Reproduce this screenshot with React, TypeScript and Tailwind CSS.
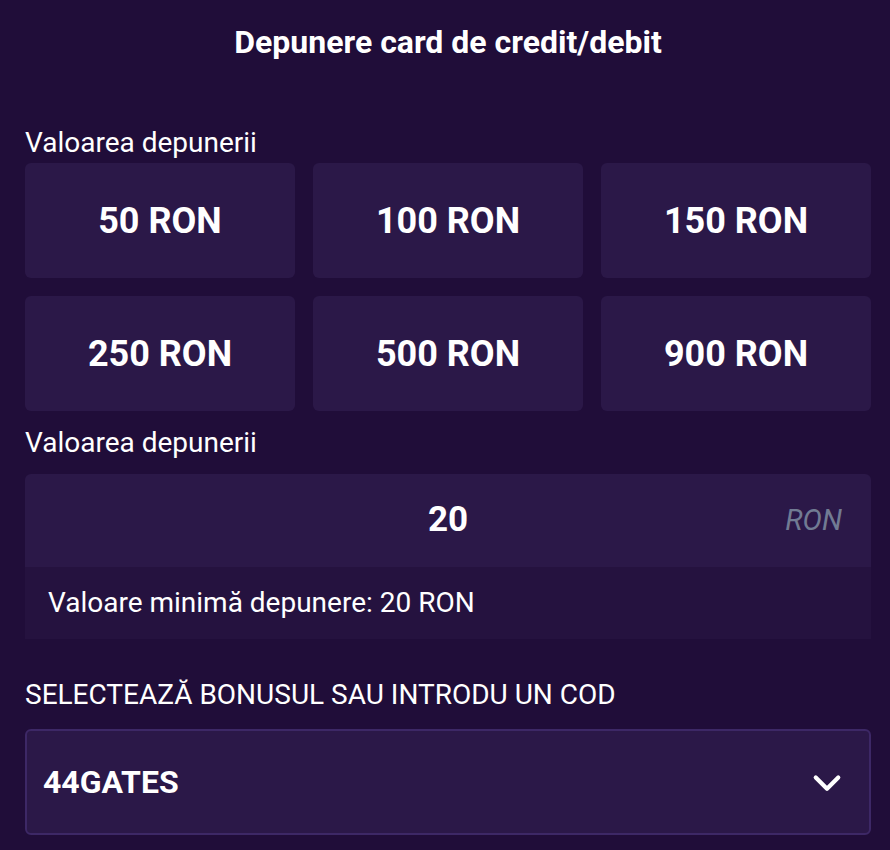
import React from "react";

const amounts = ["50 RON", "100 RON", "150 RON", "250 RON", "500 RON", "900 RON"];

export default function App() {
  return (
    <div
      className="min-h-[850px] w-full bg-[#200d39] text-white"
      style={{ fontFamily: "Roboto, 'Noto Sans', sans-serif" }}
    >
      <div className="pl-[25px] pr-[19px] pb-4">
        <h1 className="pt-[25px] text-center text-[32px] font-bold leading-[34px]">
          Depunere card de credit/debit
        </h1>
        <div className="mt-[68px] text-[28px] leading-[32px]">Valoarea depunerii</div>
        <div className="mt-[4px] grid grid-cols-3 gap-[18px]">
          {amounts.map((a) => (
            <div
              key={a}
              className="flex h-[115px] items-center justify-center rounded-[6px] bg-[#2b1848] text-[36px] font-bold"
            >
              {a}
            </div>
          ))}
        </div>
        <div className="mt-[16px] text-[28px] leading-[32px]">Valoarea depunerii</div>
        <div className="mt-[15px] overflow-hidden rounded-t-[6px]">
          <div className="relative flex h-[93px] items-center justify-center bg-[#2b1848]">
            <span className="text-[35px] font-bold">20</span>
            <span className="absolute right-[29px] top-1/2 -translate-y-1/2 text-[29px] italic text-[#717b93]">
              RON
            </span>
          </div>
          <div className="flex h-[72px] items-center bg-[#25123f] px-[23px] text-[28px]">
            Valoare minimă depunere: 20 RON
          </div>
        </div>
        <div className="mt-[40px] text-[28px] leading-[32px]">SELECTEAZĂ BONUSUL SAU INTRODU UN COD</div>
        <div className="mt-[18px] flex h-[106px] items-center justify-between rounded-[6px] border-2 border-[#3d2866] bg-[#2b1848] pl-[16px] pr-[24px]">
          <span className="text-[32px] font-bold">44GATES</span>
          <svg width="36" height="36" viewBox="0 0 24 24" fill="none" stroke="white" strokeWidth="2.8" strokeLinecap="round" strokeLinejoin="round">
            <path d="M4.5 9l7.5 7.5 7.5-7.5" />
          </svg>
        </div>
      </div>
    </div>
  );
}
